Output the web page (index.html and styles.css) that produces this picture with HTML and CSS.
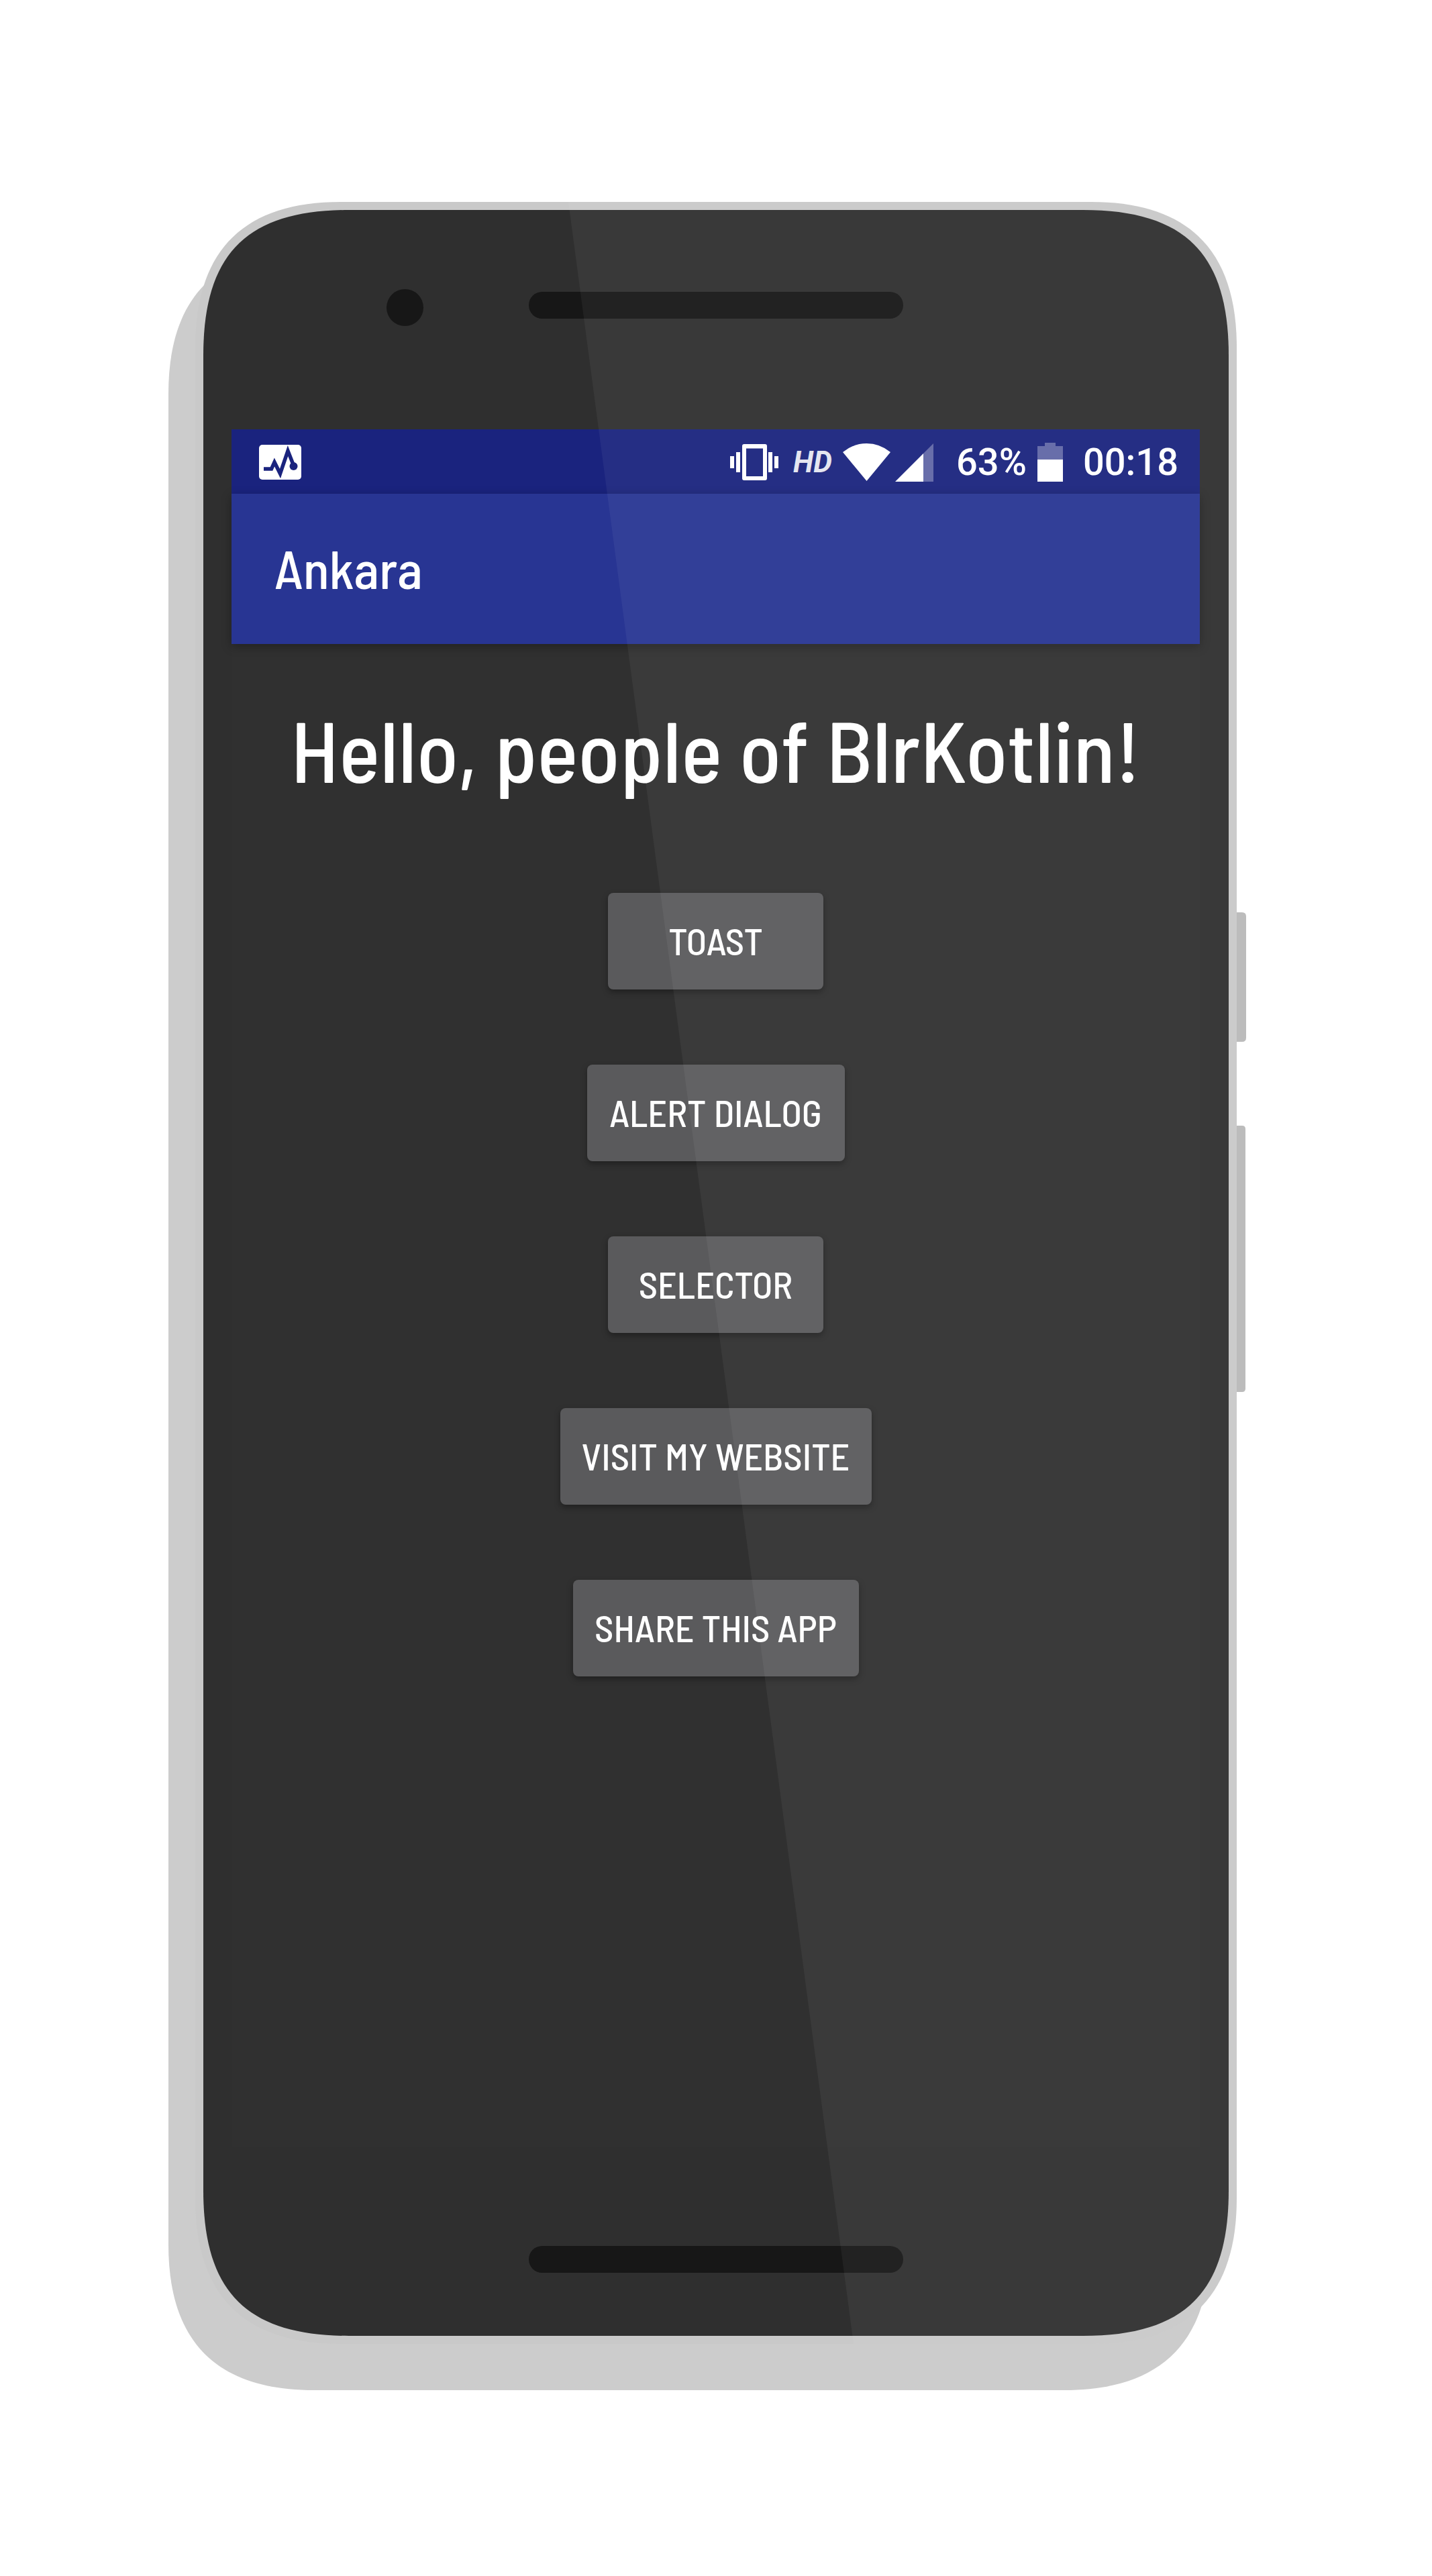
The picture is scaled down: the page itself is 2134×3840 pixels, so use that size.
FILE: index.html
```html
<!DOCTYPE html>
<html lang="en">
<head>
  <meta charset="utf-8">
  <meta name="viewport" content="width=device-width, initial-scale=1">
  <title>Ankara</title>
  <link rel="stylesheet" href="styles.css">
</head>
<body>
  <div class="stage">
    <div class="phone">
      <svg class="shell" viewBox="0 0 1552 3193" preserveAspectRatio="none" aria-hidden="true">
        <path class="shell-shadow" transform="translate(-40 69)" d="M217 0H1335C1480 0 1552 72 1552 217V2976C1552 3121 1480 3193 1335 3193H217C72 3193 0 3121 0 2976V217C0 72 72 0 217 0Z"/>
        <path class="shell-key" d="M1546 1059H1560Q1566 1059 1566 1065V1246Q1566 1252 1560 1252H1546ZM1546 1377H1560Q1565 1377 1565 1382V1769Q1565 1774 1560 1774H1546Z"/>
        <path class="shell-rim" d="M217 0H1335C1480 0 1552 72 1552 217V2976C1552 3121 1480 3193 1335 3193H217C72 3193 0 3121 0 2976V217C0 72 72 0 217 0Z"/>
        <path class="shell-face" d="M229 12H1323C1475 12 1540 77 1540 229V2964C1540 3116 1475 3181 1323 3181H229C77 3181 12 3116 12 2964V229C12 77 77 12 229 12Z"/>
      </svg>

      <div class="bezel bezel-top">
        <span class="camera"></span>
        <span class="slot slot-ear"></span>
      </div>

      <main class="screen">
        <div class="status-bar">
          <svg class="icon icon-app" width="64" height="54" viewBox="0 0 64 54" aria-hidden="true">
            <rect x="0" y="1" width="63" height="52" rx="5" fill="#fff"/>
            <path d="M7 37H18.500L23 27L31.500 44L43 10L52 33" fill="none" stroke="#1a237e" stroke-width="5.500"/>
            <circle cx="51.500" cy="33" r="6" fill="#1a237e"/>
          </svg>
          <div class="status-right">
            <svg class="icon icon-vibrate" width="72" height="56" viewBox="0 0 72 56" aria-hidden="true">
              <path fill="#fff" fill-rule="evenodd" d="M21 1H52Q55 1 55 4V52Q55 55 52 55H21Q18 55 18 52V4Q18 1 21 1ZM24 7.500V49H49V7.500Z"/>
              <path fill="#fff" d="M9 13H15V43H9ZM57 13H63V43H57ZM0 19H6V37H0ZM66 19H72V37H66Z"/>
            </svg>
            <span class="hd">HD</span>
            <svg class="icon icon-wifi" width="71" height="58" viewBox="0 0 71 58" aria-hidden="true">
              <path fill="#fff" d="M0 14Q16 1 35.500 1T71 14L35.500 57Z"/>
            </svg>
            <svg class="icon icon-signal" width="57" height="58" viewBox="0 0 57 58" aria-hidden="true">
              <path fill="#fff" fill-opacity=".31" d="M57 1V58H42V16Z"/>
              <path fill="#fff" d="M42 16V58H0Z"/>
            </svg>
            <span class="status-text battery-level">63%</span>
            <svg class="icon icon-battery" width="38" height="58" viewBox="0 0 38 58" aria-hidden="true">
              <path fill="#fff" fill-opacity=".31" d="M11 0H27V5H38V25H0V5H11Z"/>
              <path fill="#fff" d="M0 25H38V58H0Z"/>
            </svg>
            <span class="status-text clock">00:18</span>
          </div>
        </div>

        <header class="toolbar">
          <h1 class="toolbar-title">Ankara</h1>
        </header>

        <section class="content">
          <h2 class="greeting">Hello, people of BlrKotlin!</h2>
          <div class="actions">
            <button class="btn" type="button">TOAST</button>
            <button class="btn btn-alert" type="button">ALERT DIALOG</button>
            <button class="btn" type="button">SELECTOR</button>
            <button class="btn btn-visit" type="button">VISIT MY WEBSITE</button>
            <button class="btn btn-share" type="button">SHARE THIS APP</button>
          </div>
        </section>
      </main>

      <div class="bezel bezel-bottom">
        <span class="slot slot-mouth"></span>
      </div>

      <svg class="glare" viewBox="0 0 1552 3193" preserveAspectRatio="none" aria-hidden="true">
        <path fill="#fff" fill-opacity=".05" d="M556 0H1335C1480 0 1552 72 1552 217V2976C1552 3121 1480 3193 1335 3193H981Z"/>
      </svg>
    </div>
  </div>
</body>
</html>
```
FILE: styles.css
```css
* {
  box-sizing: border-box;
}

body {
  margin: 0;
  background: #fff;
  color: #fff;
  font-family: "Barlow Semi Condensed", "Roboto Condensed", "Liberation Sans Narrow", Roboto, sans-serif;
}

.stage {
  padding: 301px 60px 346px;
}

/* Device body */
.phone {
  position: relative;
  width: 100%;
  max-width: 1552px;
  margin: 0 auto;
  padding: 12px;
}

.shell,
.glare {
  position: absolute;
  inset: 0;
  width: 100%;
  height: 100%;
  overflow: visible;
}

.glare {
  pointer-events: none;
}

.shell-shadow { fill: #ccc; }
.shell-key { fill: #bcbcbc; }
.shell-rim { fill: #c9c9c9; }
.shell-face { fill: #2f2f2f; }

.bezel {
  position: relative;
  display: grid;
  grid-template-columns: 1fr auto 1fr;
  column-gap: 157px;
  align-items: start;
}

.bezel-top {
  height: 327px;
  padding-top: 118px;
}

.bezel-bottom {
  height: 282px;
  padding-top: 148px;
}

.camera {
  justify-self: end;
  width: 55px;
  height: 55px;
  border-radius: 50%;
  background: #171717;
}

.slot {
  grid-column: 2;
  width: 558px;
  height: 40px;
  border-radius: 20px;
  background: #171717;
}

.slot-ear {
  margin-top: 4px;
}

/* Screen */
.screen {
  position: relative;
  min-height: 2560px;
  margin: 0 43px 0 42px;
  background: #303030;
}

.status-bar {
  display: flex;
  align-items: center;
  justify-content: space-between;
  height: 96px;
  padding: 2px 32px 0 41px;
  background: #1a237e;
}

.status-right {
  display: flex;
  align-items: center;
}

.icon {
  display: block;
  flex: none;
}

.hd {
  width: 60px;
  margin: 0 14px 0 22px;
  font: italic 700 44px/56px Roboto, sans-serif;
  color: #e4e5f0;
}

.icon-signal {
  margin-left: 7px;
}

.status-text {
  font: 500 56px/64px Roboto, sans-serif;
}

.battery-level {
  margin: 0 16px 0 34px;
}

.clock {
  margin-left: 30px;
}

.toolbar {
  display: flex;
  align-items: center;
  height: 224px;
  padding: 0 64px 4px;
  background: #283593;
  box-shadow: 0 4px 14px rgba(0, 0, 0, 0.3);
}

.toolbar-title {
  margin: 0;
  font-size: 80px;
  font-weight: 500;
  line-height: 96px;
}

.content {
  display: flex;
  flex-direction: column;
  align-items: center;
  padding: 76px 24px;
}

.greeting {
  margin: 0;
  font-size: 128px;
  font-weight: 500;
  line-height: 160px;
  text-align: center;
}

.actions {
  display: flex;
  flex-direction: column;
  align-items: center;
  gap: 112px;
  margin-top: 135px;
}

.btn {
  min-width: 321px;
  height: 144px;
  padding: 0 16px 2px;
  border: 0;
  border-radius: 8px;
  background: #5a5a5c;
  box-shadow: 0 4px 10px rgba(0, 0, 0, 0.35);
  color: #fff;
  font-family: inherit;
  font-size: 56px;
  font-weight: 500;
  line-height: 64px;
}

.btn-alert { min-width: 384px; }
.btn-visit { min-width: 464px; }
.btn-share { min-width: 426px; }
```
